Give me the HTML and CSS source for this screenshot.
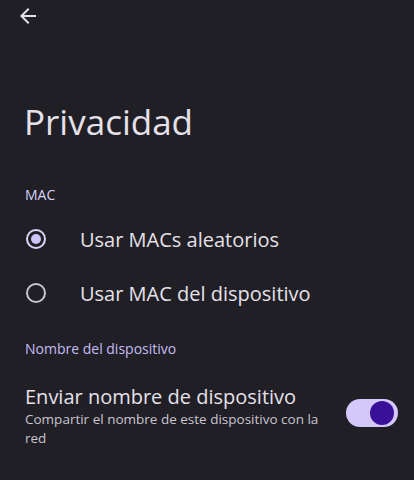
FILE: index.html
```html
<!DOCTYPE html>
<html lang="es">
<head>
    <meta charset="UTF-8">
    <meta name="viewport" content="width=device-width, initial-scale=1.0">
    <title>Privacidad</title>
    <link rel="stylesheet" href="styles.css">
</head>
<body>
    <div class="topbar">
        <svg class="back" width="24" height="24" viewBox="0 0 24 24">
            <path d="M20 11H7.83l5.59-5.59L12 4l-8 8 8 8 1.41-1.41L7.83 13H20v-2z" fill="#e6e1e9"/>
        </svg>
    </div>

    <h1 class="titulo">Privacidad</h1>

    <div class="seccion">MAC</div>

    <div class="opciones">
        <div class="opcion">
            <span class="radio marcado"></span>
            <span class="opcion-texto">Usar MACs aleatorios</span>
        </div>
        <div class="opcion">
            <span class="radio"></span>
            <span class="opcion-texto">Usar MAC del dispositivo</span>
        </div>
    </div>

    <div class="seccion seccion-nombre">Nombre del dispositivo</div>

    <div class="ajuste">
        <div class="ajuste-textos">
            <div class="ajuste-titulo">Enviar nombre de dispositivo</div>
            <div class="ajuste-resumen">Compartir el nombre de este dispositivo con la red</div>
        </div>
        <span class="interruptor"><span class="pulgar"></span></span>
    </div>
</body>
</html>
```

FILE: styles.css
```css
body {
    margin: 0;
    background-color: #201f26;
    color: #e6e1e9;
    font-family: 'Open Sans', 'Noto Sans', sans-serif;
}
.topbar {
    height: 32px;
    padding: 4px 0 0 16px;
    box-sizing: border-box;
}
.back {
    display: block;
}
.titulo {
    margin: 0;
    padding: 64px 0 0 24px;
    font-size: 35px;
    font-weight: 400;
    line-height: 52px;
}
.seccion {
    padding: 37px 24px 0 25px;
    font-size: 14px;
    line-height: 20px;
    color: #d8d2f3;
}
.seccion-nombre {
    padding-top: 19px;
    color: #c6bcf4;
}
.opciones {
    padding-top: 7px;
}
.opcion {
    display: flex;
    align-items: center;
    height: 54px;
    padding-left: 26px;
}
.radio {
    width: 20px;
    height: 20px;
    box-sizing: border-box;
    border: 2px solid #cac4d0;
    border-radius: 50%;
    display: flex;
    align-items: center;
    justify-content: center;
}
.radio.marcado {
    border-color: #dcd5f7;
}
.radio.marcado::after {
    content: '';
    width: 10px;
    height: 10px;
    border-radius: 50%;
    background-color: #cfc4fa;
}
.opcion-texto {
    margin-left: 34px;
    font-size: 20px;
}
.ajuste {
    display: flex;
    align-items: center;
    padding: 24px 16px 0 25px;
}
.ajuste-textos {
    flex: 1;
    padding-right: 16px;
}
.ajuste-titulo {
    font-size: 20px;
    line-height: 27px;
}
.ajuste-resumen {
    font-size: 13.5px;
    line-height: 19px;
    color: #cac4d0;
}
.interruptor {
    width: 52px;
    height: 28px;
    border-radius: 14px;
    background-color: #d4c8fa;
    display: flex;
    align-items: center;
    justify-content: flex-end;
    padding-right: 4px;
    box-sizing: border-box;
    margin-top: -6px;
}
.pulgar {
    width: 24px;
    height: 24px;
    border-radius: 50%;
    background-color: #38109a;
}
```
